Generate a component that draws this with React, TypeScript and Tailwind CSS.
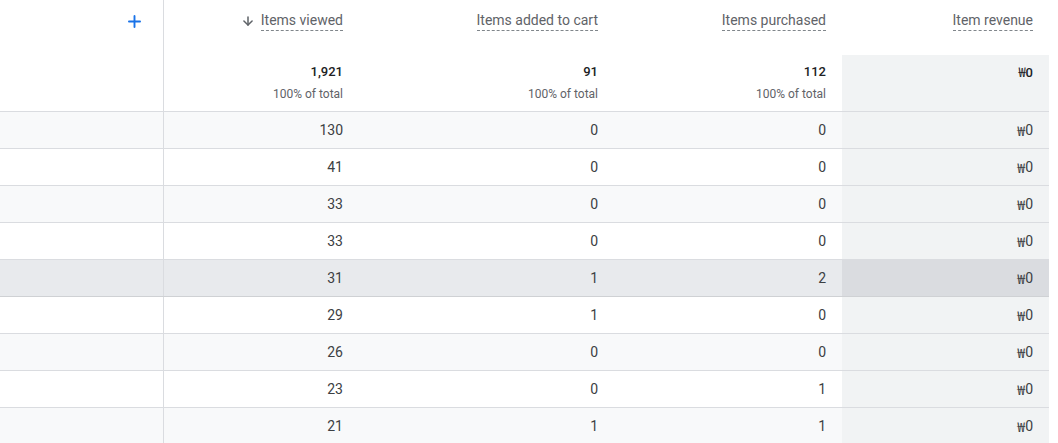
import { ArrowDown, Plus } from 'lucide-react';

type Row = { viewed: string; cart: string; purchased: string };

const ROWS: Row[] = [
  { viewed: '130', cart: '0', purchased: '0' },
  { viewed: '41', cart: '0', purchased: '0' },
  { viewed: '33', cart: '0', purchased: '0' },
  { viewed: '33', cart: '0', purchased: '0' },
  { viewed: '31', cart: '1', purchased: '2' },
  { viewed: '29', cart: '1', purchased: '0' },
  { viewed: '26', cart: '0', purchased: '0' },
  { viewed: '23', cart: '0', purchased: '1' },
  { viewed: '21', cart: '1', purchased: '1' },
];

const HOVER_ROW = 4;

function Won() {
  return <span className="font-['Noto_Sans_CJK_KR',sans-serif] font-normal">₩</span>;
}

function HeaderLabel({ children, sorted }: { children: string; sorted?: boolean }) {
  return (
    <div className="flex items-center justify-end gap-[6px] pt-[11px]">
      {sorted && <ArrowDown className="h-[14px] w-[14px] text-[#5f6368]" strokeWidth={2.6} />}
      <span className="border-b border-dashed border-[#80868b] text-[14px] leading-[19px] text-[#5f6368]">
        {children}
      </span>
    </div>
  );
}

function Total({ value, revenue }: { value: string; revenue?: boolean }) {
  return (
    <div className="flex flex-col items-end pt-[8px]">
      <span className="text-[13px] font-medium leading-[18px] text-[#202124]">
        {revenue && <Won />}
        {value}
      </span>
      {!revenue && (
        <span className="mt-[5px] text-[12px] leading-[16px] text-[#5f6368]">100% of total</span>
      )}
    </div>
  );
}

export default function App() {
  return (
    <div className="h-[443px] w-[1058px] overflow-hidden bg-white font-['Roboto','Liberation_Sans',sans-serif]">
      <div className="w-[1049px]">
        {/* Column headers */}
        <div className="flex h-[55px]">
          <div className="flex w-[164px] shrink-0 justify-end border-r border-[#dadce0] pr-[19px] pt-[12px]">
            <Plus className="h-[19px] w-[19px] text-[#1a73e8]" strokeWidth={2.4} />
          </div>
          <div className="w-[195px] shrink-0 pr-4">
            <HeaderLabel sorted>Items viewed</HeaderLabel>
          </div>
          <div className="w-[255px] shrink-0 pr-4">
            <HeaderLabel>Items added to cart</HeaderLabel>
          </div>
          <div className="w-[228px] shrink-0 pr-4">
            <HeaderLabel>Items purchased</HeaderLabel>
          </div>
          <div className="w-[207px] shrink-0 pr-4">
            <HeaderLabel>Item revenue</HeaderLabel>
          </div>
        </div>

        {/* Totals */}
        <div className="flex h-[57px] border-b border-[#dadce0]">
          <div className="w-[164px] shrink-0 border-r border-[#dadce0]" />
          <div className="w-[195px] shrink-0 pr-4">
            <Total value="1,921" />
          </div>
          <div className="w-[255px] shrink-0 pr-4">
            <Total value="91" />
          </div>
          <div className="w-[228px] shrink-0 pr-4">
            <Total value="112" />
          </div>
          <div className="w-[207px] shrink-0 bg-[#f1f3f4] pr-4">
            <Total value="0" revenue />
          </div>
        </div>

        {/* Data rows */}
        {ROWS.map((row, i) => {
          const hover = i === HOVER_ROW;
          const rowBg = hover ? 'bg-[#e8eaed]' : i % 2 === 0 ? 'bg-[#f8f9fa]' : 'bg-white';
          return (
            <div
              key={i}
              className={
                'flex h-[37px] border-b text-[14px] text-[#3c4043] ' +
                (hover ? 'border-[#cfd1d4] ' : 'border-[#dadce0] ') +
                rowBg
              }
            >
              <div className="w-[164px] shrink-0 border-r border-[#dadce0]" />
              <div className="flex w-[195px] shrink-0 items-center justify-end pr-4">{row.viewed}</div>
              <div className="flex w-[255px] shrink-0 items-center justify-end pr-4">{row.cart}</div>
              <div className="flex w-[228px] shrink-0 items-center justify-end pr-4">{row.purchased}</div>
              <div
                className={
                  'flex w-[207px] shrink-0 items-center justify-end pr-4 ' +
                  (hover ? 'bg-[#dadce0]' : 'bg-[#f1f3f4]')
                }
              >
                <Won />0
              </div>
            </div>
          );
        })}
      </div>
    </div>
  );
}
